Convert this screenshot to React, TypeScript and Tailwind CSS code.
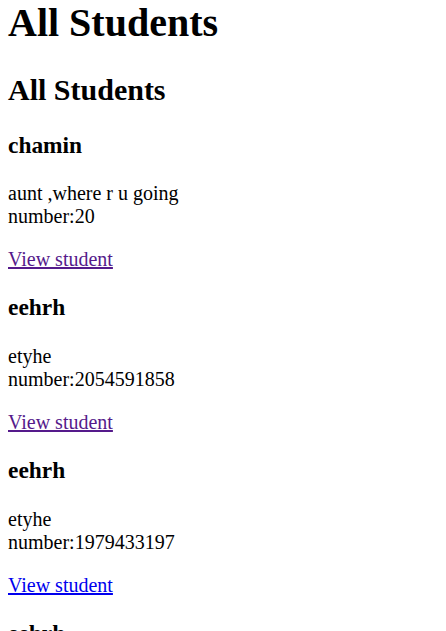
const students = [
  { name: 'chamin', about: 'aunt ,where r u going', number: '20', visited: true },
  { name: 'eehrh', about: 'etyhe', number: '2054591858', visited: true },
  { name: 'eehrh', about: 'etyhe', number: '1979433197', visited: false },
  { name: 'eehrh', about: 'etyhe', number: '1979433197', visited: false },
]

export default function App() {
  return (
    <div className="px-2 pt-px font-['Liberation_Serif',serif] leading-[normal] text-black bg-white">
      <h1 className="text-[40px] font-bold mt-[-2px] mb-[26.8px]">All Students</h1>
      <h2 className="text-[30px] font-bold my-[24.9px]">All Students</h2>

      {students.map((s, i) => (
        <div key={i}>
          <h3 className="text-[23.4px] font-bold my-[23.4px]">{s.name}</h3>
          <p className="text-[20px] my-5">
            {s.about}
            <br />
            number:{s.number}
          </p>
          <p className="text-[20px] my-5">
            <a
              href="#"
              className={s.visited ? 'underline text-[#551a8b]' : 'underline text-[#0000ee]'}
            >
              View student
            </a>
          </p>
        </div>
      ))}
    </div>
  )
}
